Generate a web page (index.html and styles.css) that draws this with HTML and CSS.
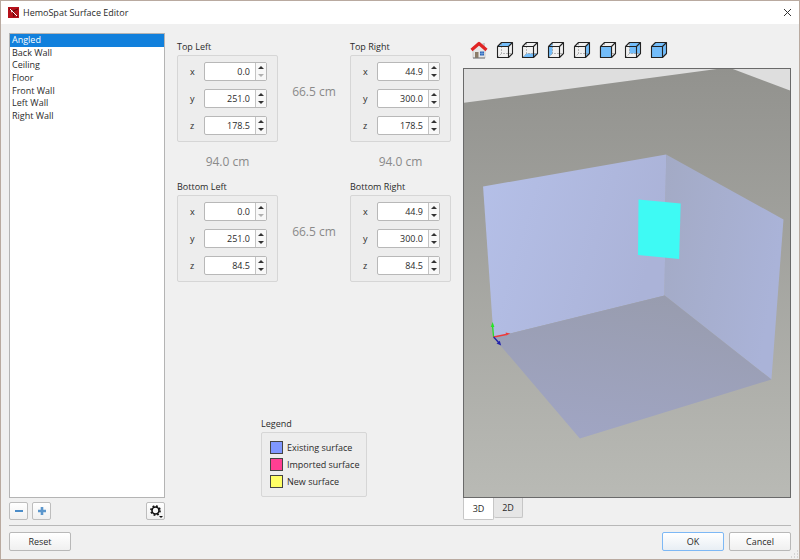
FILE: index.html
```html
<!DOCTYPE html>
<html lang="en">
<head>
<meta charset="utf-8">
<title>HemoSpat Surface Editor</title>
<link rel="stylesheet" href="styles.css">
</head>
<body>
<svg class="defs" aria-hidden="true">
  <symbol id="cube" viewBox="0 0 18 18">
    <path class="hidden-edge" d="M5.500 2v10.500h11M5.500 12.500l-4 4"/>
    <path class="edge" d="M1.500 5.500h11v11h-11zM1.500 5.500L5.500 1.500H16.500V12.500L12.500 16.500M12.500 5.500L16.500 1.500"/>
  </symbol>
</svg>
<header class="titlebar">
  <svg class="logo" viewBox="0 0 11 11" aria-hidden="true">
    <rect width="11" height="11" fill="#b5121b"/>
    <path d="M1 2l4 2 1 6M4 4l6 6M5 4l5-2" stroke="#5d070c" stroke-width="1" fill="none"/>
    <path d="M2 2l7 7M3 5l2-1" stroke="#fff" stroke-width="1" fill="none"/>
  </svg>
  <h1>HemoSpat Surface Editor</h1>
  <button class="close" aria-label="Close"><svg viewBox="0 0 9 9"><path d="M1 1l7 7M8 1l-7 7" stroke="#333" fill="none"/></svg></button>
</header>
<main class="content">
  <section class="surfaces">
    <div class="list-box">
      <ul class="list" role="listbox" aria-label="Surfaces">
        <li role="option" aria-selected="true">Angled</li>
        <li role="option">Back Wall</li>
        <li role="option">Ceiling</li>
        <li role="option">Floor</li>
        <li role="option">Front Wall</li>
        <li role="option">Left Wall</li>
        <li role="option">Right Wall</li>
      </ul>
    </div>
    <div class="list-tools">
      <button class="tool" aria-label="Remove surface"><svg viewBox="0 0 10 10"><path d="M1 5h8" stroke="#4b8cc8" stroke-width="2"/></svg></button>
      <button class="tool" aria-label="Add surface"><svg viewBox="0 0 10 10"><path d="M1 5h8M5 1v8" stroke="#5b96cc" stroke-width="2.600"/></svg></button>
      <button class="tool gear" aria-label="Options"><svg viewBox="0 0 14 14"><circle cx="6.500" cy="6.500" r="4.600" fill="none" stroke="#111" stroke-width="1.600" stroke-dasharray="1.806"/><circle cx="6.500" cy="6.500" r="3.500" fill="none" stroke="#111" stroke-width="1.600"/><path d="M10 12h4l-2 2z" fill="#111"/></svg></button>
    </div>
  </section>

  <section class="editor">
    <div class="corners">
      <fieldset class="group">
        <legend>Top Left</legend>
        <div class="panel">
          <label for="tlx">x</label><div class="spin"><input id="tlx" value="0.0"><span class="steps"><button class="up" aria-label="Increase"></button><button class="down off" aria-label="Decrease" disabled></button></span></div>
          <label for="tly">y</label><div class="spin"><input id="tly" value="251.0"><span class="steps"><button class="up" aria-label="Increase"></button><button class="down" aria-label="Decrease"></button></span></div>
          <label for="tlz">z</label><div class="spin"><input id="tlz" value="178.5"><span class="steps"><button class="up" aria-label="Increase"></button><button class="down" aria-label="Decrease"></button></span></div>
        </div>
      </fieldset>
      <output class="distance across">66.5 cm</output>
      <fieldset class="group">
        <legend>Top Right</legend>
        <div class="panel">
          <label for="trx">x</label><div class="spin"><input id="trx" value="44.9"><span class="steps"><button class="up" aria-label="Increase"></button><button class="down" aria-label="Decrease"></button></span></div>
          <label for="try">y</label><div class="spin"><input id="try" value="300.0"><span class="steps"><button class="up" aria-label="Increase"></button><button class="down" aria-label="Decrease"></button></span></div>
          <label for="trz">z</label><div class="spin"><input id="trz" value="178.5"><span class="steps"><button class="up" aria-label="Increase"></button><button class="down" aria-label="Decrease"></button></span></div>
        </div>
      </fieldset>
      <output class="distance">94.0 cm</output>
      <span></span>
      <output class="distance">94.0 cm</output>
      <fieldset class="group">
        <legend>Bottom Left</legend>
        <div class="panel">
          <label for="blx">x</label><div class="spin"><input id="blx" value="0.0"><span class="steps"><button class="up" aria-label="Increase"></button><button class="down off" aria-label="Decrease" disabled></button></span></div>
          <label for="bly">y</label><div class="spin"><input id="bly" value="251.0"><span class="steps"><button class="up" aria-label="Increase"></button><button class="down" aria-label="Decrease"></button></span></div>
          <label for="blz">z</label><div class="spin"><input id="blz" value="84.5"><span class="steps"><button class="up" aria-label="Increase"></button><button class="down" aria-label="Decrease"></button></span></div>
        </div>
      </fieldset>
      <output class="distance across">66.5 cm</output>
      <fieldset class="group">
        <legend>Bottom Right</legend>
        <div class="panel">
          <label for="brx">x</label><div class="spin"><input id="brx" value="44.9"><span class="steps"><button class="up" aria-label="Increase"></button><button class="down" aria-label="Decrease"></button></span></div>
          <label for="bry">y</label><div class="spin"><input id="bry" value="300.0"><span class="steps"><button class="up" aria-label="Increase"></button><button class="down" aria-label="Decrease"></button></span></div>
          <label for="brz">z</label><div class="spin"><input id="brz" value="84.5"><span class="steps"><button class="up" aria-label="Increase"></button><button class="down" aria-label="Decrease"></button></span></div>
        </div>
      </fieldset>
    </div>
    <div class="key">
      <h2>Legend</h2>
      <ul class="key-panel">
        <li><i class="swatch existing"></i>Existing surface</li>
        <li><i class="swatch imported"></i>Imported surface</li>
        <li><i class="swatch new"></i>New surface</li>
      </ul>
    </div>
  </section>

  <section class="viewer">
    <div class="views">
      <button aria-label="Home view"><svg viewBox="0 0 18 18">
        <path d="M3 8l6-5 6 5v9H3z" fill="#e6e6e6" stroke="#aaa" stroke-width=".5"/>
        <path d="M12.500 2h2.500v5l-2.500-2z" fill="#c9c9c9"/>
        <path d="M5 11h3.500v6H5z" fill="#8b7c68"/>
        <path d="M10 10.500h4v4h-4z" fill="#2f67b8"/><path d="M12 10.500v4M10 12.500h4" stroke="#8fb8ea" stroke-width=".5"/>
        <path d="M1.500 9l7.500-6.500 7.500 6.500" fill="none" stroke="#e02424" stroke-width="3.200" stroke-linejoin="round"/>
        <path d="M3 17h12" stroke="#777"/></svg></button>
      <button aria-label="Top view"><svg viewBox="0 0 18 18"><path class="face" d="M1.500 5.500l4-4h11l-4 4z"/><use href="#cube"/></svg></button>
      <button aria-label="Bottom view"><svg viewBox="0 0 18 18"><path class="face" d="M1.500 16.500l4-4h11l-4 4z"/><use href="#cube"/></svg></button>
      <button aria-label="Left view"><svg viewBox="0 0 18 18"><path class="face" d="M1.500 5.500l4-4v11l-4 4z"/><use href="#cube"/></svg></button>
      <button aria-label="Right view"><svg viewBox="0 0 18 18"><path class="face" d="M12.500 5.500l4-4v11l-4 4z"/><use href="#cube"/></svg></button>
      <button aria-label="Front view"><svg viewBox="0 0 18 18"><use href="#cube"/><path class="face outlined" d="M1.500 5.500h11v11h-11z"/></svg></button>
      <button aria-label="Back view"><svg viewBox="0 0 18 18"><path class="face" d="M5.500 1.500h11v11h-11z"/><use href="#cube"/></svg></button>
      <button aria-label="Solid view"><svg viewBox="0 0 18 18"><path class="face outlined" d="M1.500 5.500l4-4h11v11l-4 4h-11zM1.500 5.500h11v11M12.500 5.500l4-4"/></svg></button>
    </div>
    <div class="scene">
      <svg viewBox="0 0 325 428" preserveAspectRatio="none" role="img" aria-label="3D room view">
        <defs>
          <linearGradient id="ground" x2="0" y2="1"><stop stop-color="#92928e"/><stop offset="1" stop-color="#b9bab5"/></linearGradient>
          <linearGradient id="back" x2="1" y2=".3"><stop stop-color="#b5c0e8"/><stop offset="1" stop-color="#abb3d8"/></linearGradient>
          <linearGradient id="side" x2="1" y2=".3"><stop stop-color="#a3aac5"/><stop offset="1" stop-color="#aab3d8"/></linearGradient>
          <linearGradient id="floor" x1=".7" x2=".4" y2="1"><stop stop-color="#989cae"/><stop offset="1" stop-color="#a0a5c3"/></linearGradient>
        </defs>
        <path d="M0 0h325v428H0z" fill="#dedede"/>
        <path d="M-1 34L252 0l8-1 8 1 58 22v407H-1z" fill="url(#ground)"/>
        <path d="M19 117.500L201.500 85.500 200 226.500 29.500 268.500z" fill="url(#back)"/>
        <path d="M201.500 85.500L318.500 150.500 306.500 310.500 200 226.500z" fill="url(#side)"/>
        <path d="M29.500 268.500L200 226.500 306.500 310.500 115.500 369.500z" fill="url(#floor)"/>
        <path d="M174 130.500L216 134.500 214.500 190 173.500 186z" fill="#3efaf4"/>
        <g fill="none" stroke-width="1.300"><path d="M29.500 268L28.500 257" stroke="#26dd26"/><path d="M29.500 268L42 265.500" stroke="#ee3a3a"/><path d="M29.500 268L35 274" stroke="#2222aa"/></g>
        <path d="M28.500 253l1.800 5h-3.600z" fill="#26e626"/><path d="M46 264.500l-4.500-.9.700 3z" fill="#ee3a3a"/><path d="M37 276.500l-4.500-2 3.200-2.700z" fill="#2222aa"/>
      </svg>
    </div>
    <div class="tabs" role="tablist">
      <button role="tab" class="tab active" aria-selected="true">3D</button>
      <button role="tab" class="tab" aria-selected="false">2D</button>
    </div>
  </section>
</main>
<footer class="actions">
  <button class="action reset">Reset</button>
  <button class="action primary">OK</button>
  <button class="action">Cancel</button>
</footer>
<svg class="grip" viewBox="0 0 9 9" aria-hidden="true"><path d="M7 1h1M7 4h1M4 4h1M7 7h1M4 7h1M1 7h1" stroke="#bbb"/></svg>
</body>
</html>
```
FILE: styles.css
```css
* { box-sizing: border-box; }
body {
  margin: 0;
  height: 100vh;
  display: flex;
  flex-direction: column;
  border: 1px solid #b9aaa0;
  background: #f0f0f0;
  color: #2a2a2a;
  font: 9px/12px "Open Sans", "Noto Sans", sans-serif;
}
button, input { font: inherit; color: inherit; margin: 0; }
button { padding: 0; border: 0; background: none; }
h1, h2 { margin: 0; font: inherit; }
ul { margin: 0; padding: 0; list-style: none; }
svg { display: block; }
.defs { position: absolute; width: 0; height: 0; }

.titlebar {
  display: flex;
  align-items: center;
  gap: 4px;
  height: 23px;
  padding: 0 7px;
  background: #fff;
}
.logo { width: 11px; height: 11px; }
.close { margin-left: auto; }
.close svg { width: 9px; height: 9px; }

.content {
  flex: 1;
  min-height: 0;
  display: grid;
  grid-template-columns: 156px 274px 1fr;
  column-gap: 12px;
  margin: 0 8px;
  padding-top: 9px;
  border-bottom: 1px solid #b8b8b8;
}
.surfaces, .editor, .viewer { display: flex; flex-direction: column; min-height: 0; }

.list-box { flex: 1; border: 1px solid #b4b4b4; background: #fff; }
.list { display: grid; grid-template-rows: repeat(7, 1fr); height: 88px; }
.list li { display: flex; align-items: center; padding-left: 2px; }
.list [aria-selected="true"] { background: #1180dc; color: #fff; }
.list-tools { display: flex; gap: 4px; padding: 4px 0 5px; }
.tool {
  display: grid;
  place-items: center;
  width: 19px;
  height: 18px;
  border: 1px solid #bdbdbd;
  border-radius: 2px;
  background: linear-gradient(#fff, #f0f0f0);
}
.tool svg { width: 10px; height: 10px; }
.gear { margin-left: auto; }
.gear svg { width: 14px; height: 14px; }

.corners {
  display: grid;
  grid-template-columns: 101px 1fr 101px;
  padding-top: 8px;
}
.group { min-width: 0; margin: 0; padding: 0; border: 0; }
.group legend { padding: 0; height: 14px; }
.panel {
  display: grid;
  grid-template-columns: 6px 63px;
  align-items: center;
  justify-content: end;
  gap: 8px;
  padding: 6px 10px 6px 0;
  border: 1px solid #d6d6d6;
  border-radius: 2px;
  background: #ededed;
}
.spin {
  display: flex;
  height: 19px;
  border: 1px solid #b8b8b8;
  border-radius: 2px;
  background: #fff;
}
.spin input {
  flex: 1;
  min-width: 0;
  padding: 0 5px 0 0;
  border: 0;
  background: none;
  text-align: right;
}
.steps {
  display: flex;
  flex-direction: column;
  width: 11px;
  border-left: 1px solid #c4c4c4;
  background: #f8f8f8;
}
.steps button { flex: 1; display: grid; place-items: center; }
.steps button::before { content: ""; border: 3px solid transparent; }
.steps .up::before { border-top: 0; border-bottom-color: #333; }
.steps .down::before { border-bottom: 0; border-top-color: #333; }
.steps .off::before { border-top-color: #b0b0b0; }
.distance {
  display: grid;
  place-items: center;
  height: 39px;
  font-size: 12px;
  line-height: 16px;
  color: #8a8a8a;
}
.across { height: auto; }

.key { align-self: center; width: 106px; margin: auto 0 28px; }
.key h2 { height: 14px; }
.key-panel {
  display: grid;
  gap: 4px;
  padding: 8px;
  border: 1px solid #d6d6d6;
  border-radius: 2px;
  background: #ededed;
}
.key-panel li { display: flex; align-items: center; gap: 4px; height: 13px; white-space: nowrap; }
.swatch { width: 13px; height: 13px; border: 1px solid #444; }
.existing { background: #7f97ff; }
.imported { background: #ff3f92; }
.new { background: #ffff66; }

.views {
  display: grid;
  grid-template-columns: repeat(8, 1fr);
  width: 206px;
  height: 35px;
  padding-bottom: 2px;
  margin-left: 3px;
  align-items: center;
  justify-items: center;
}
.views svg { width: 18px; height: 18px; }
.edge { fill: none; stroke: #222; stroke-width: 1.1; stroke-linejoin: round; }
.hidden-edge { fill: none; stroke: #999; stroke-width: 0.7; stroke-dasharray: 2 1; }
.face { fill: #73bdfa; }
.outlined { stroke: #222; stroke-width: 1.1; stroke-linejoin: round; }
.scene { flex: 1; min-height: 0; border: 1px solid #6a6a6a; }
.scene svg { width: 100%; height: 100%; }
.tabs { display: flex; align-items: flex-start; height: 27px; }
.tab {
  width: 29px;
  height: 20px;
  border: 1px solid #c6c6c6;
  border-top: 0;
  border-left: 0;
  border-radius: 0 0 2px 2px;
  background: #e6e6e6;
}
.active { width: 31px; height: 22px; border-left: 1px solid #c6c6c6; background: #fff; }

.actions { display: flex; align-items: center; gap: 5px; padding: 6px 8px 8px; }
.action {
  width: 62px;
  height: 19px;
  border: 1px solid #b8b8b8;
  border-radius: 2px;
  background: linear-gradient(#fff, #f0f0f0);
}
.reset { margin-right: auto; }
.primary { border-color: #7db8f5; background: linear-gradient(#fff, #e8eef4); }
.grip { position: absolute; right: 1px; bottom: 1px; width: 9px; height: 9px; }
```
